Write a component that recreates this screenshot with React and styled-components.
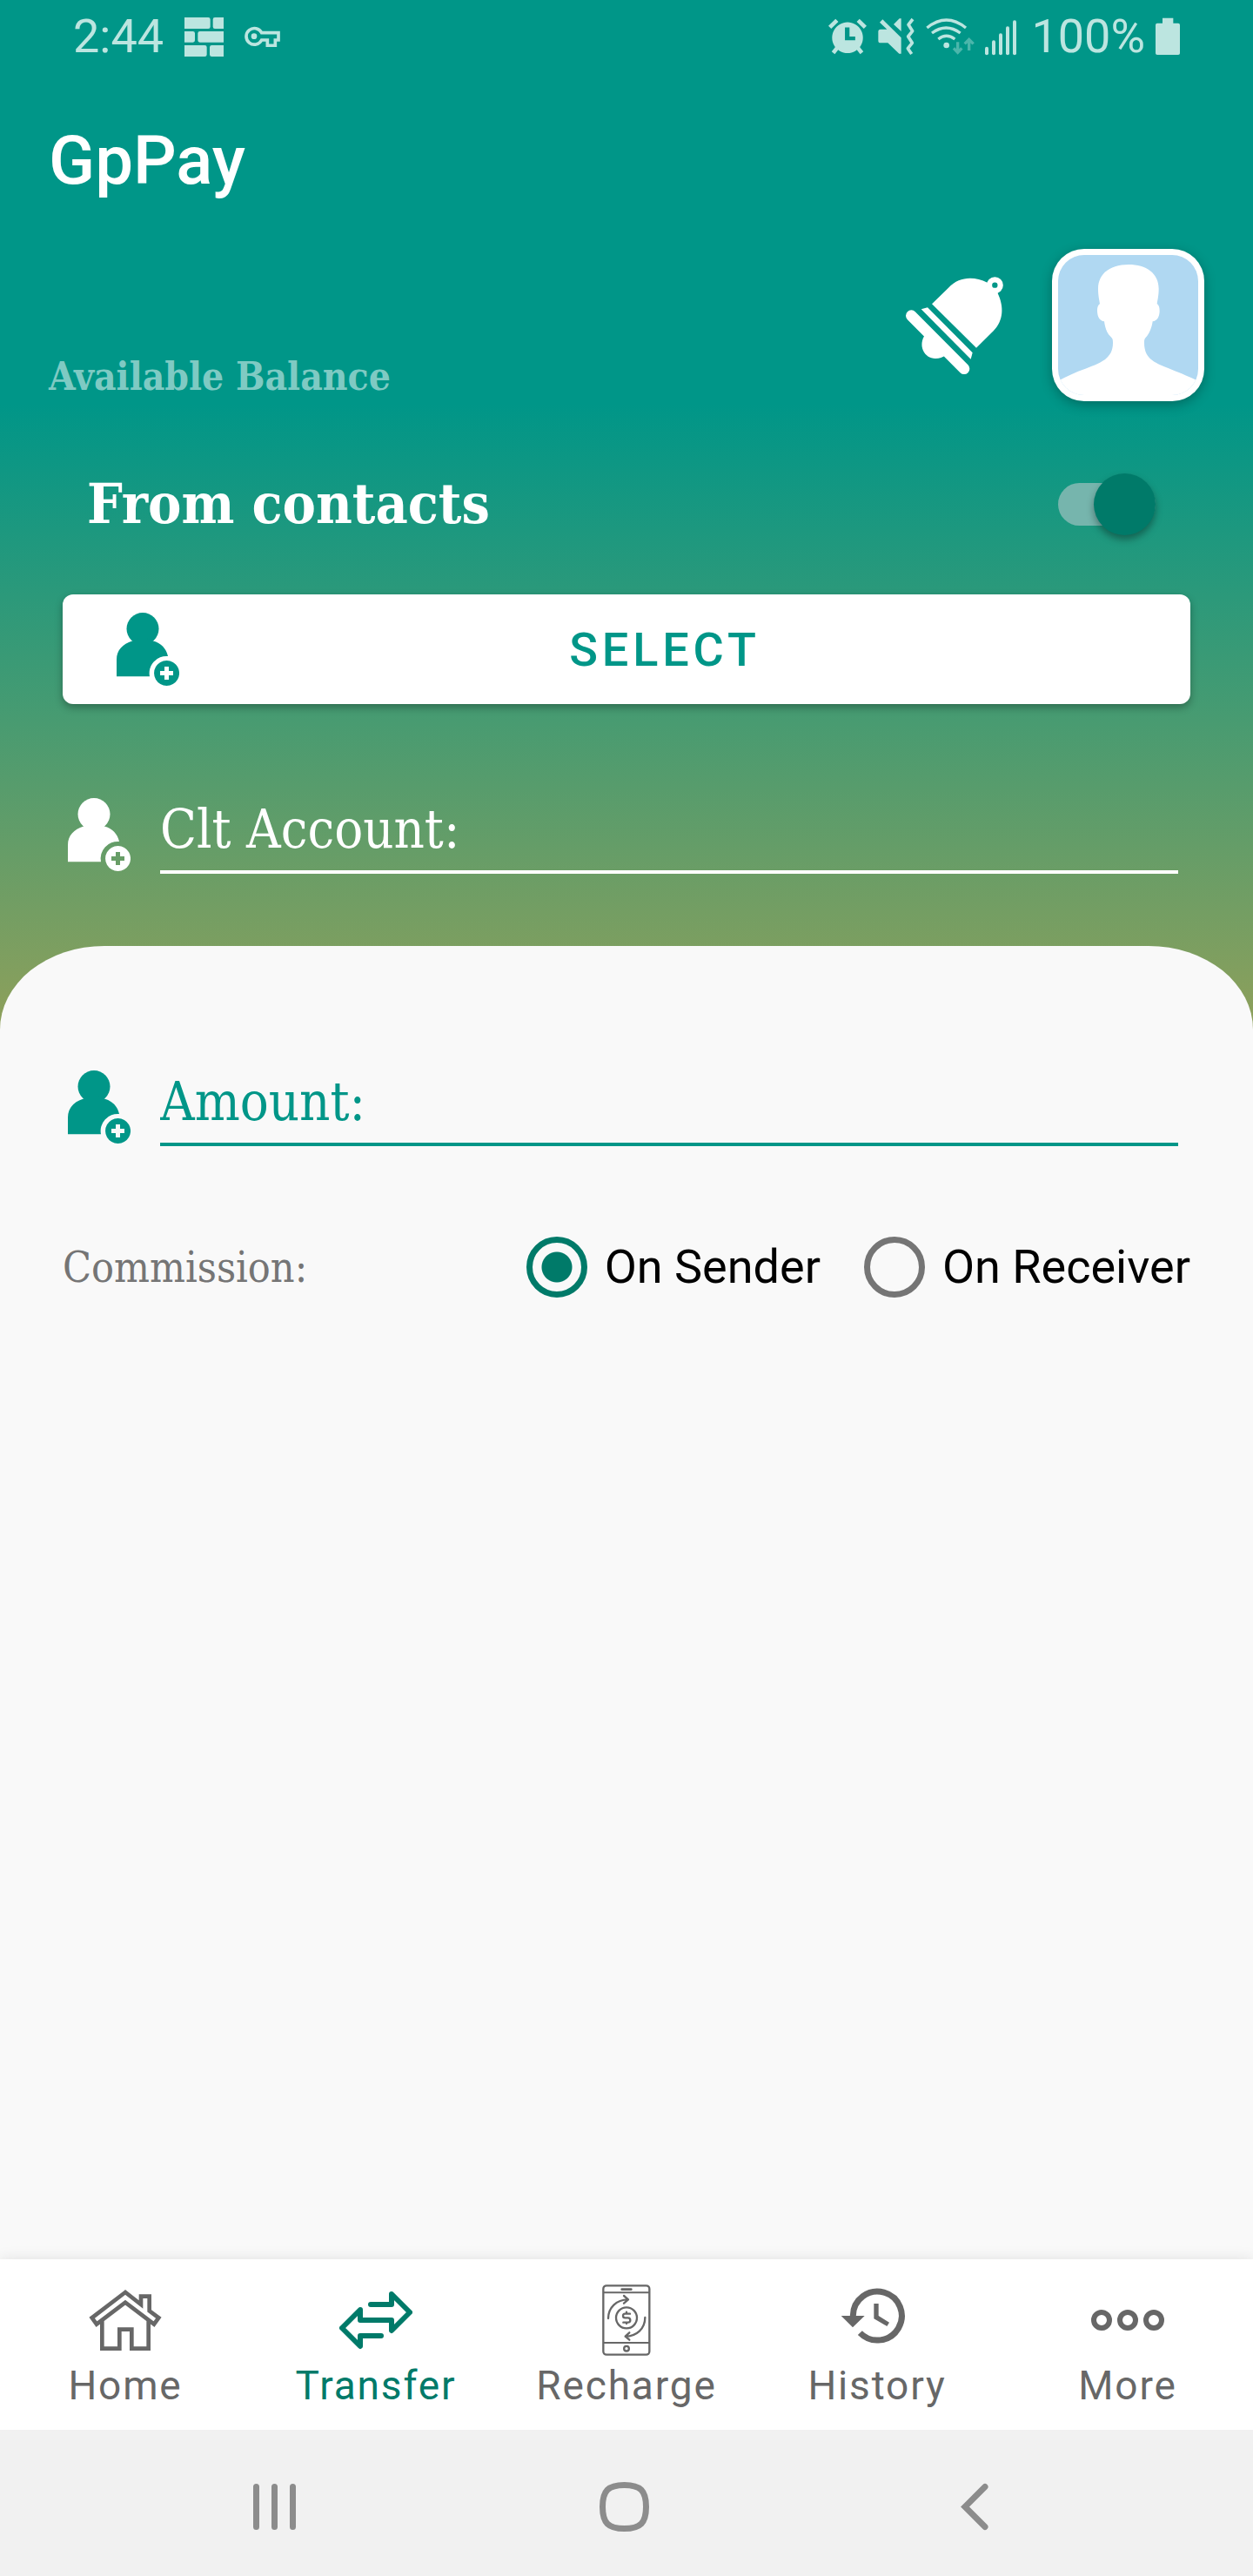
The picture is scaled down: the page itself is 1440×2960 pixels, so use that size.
import React, { useState } from "react";
import styled, { createGlobalStyle, css } from "styled-components";

const color = {
  teal: "#009688",
  tealDark: "#007a69",
  status: "#bce5e0",
  paper: "#f9f9f9",
  grey: "#676767",
  hint: "#757575",
};

const slab = `"DejaVu Serif Condensed", "DejaVu Serif", serif`;

const GlobalStyle = createGlobalStyle`
  *, *::before, *::after { box-sizing: border-box; }
  body { margin: 0; font-family: Roboto, sans-serif; }
  button, input { font: inherit; margin: 0; }
`;

const Screen = styled.div`
  display: flex;
  flex-direction: column;
  min-height: 100vh;
  background: linear-gradient(#009688 465px, #90a05a 1190px);
`;

/* Status bar */
const StatusBar = styled.header`
  display: flex;
  align-items: center;
  justify-content: space-between;
  height: 84px;
  padding: 0 84px;
  color: ${color.status};
  font-size: 54px;
  line-height: 84px;
`;

const StatusGroup = styled.div`
  display: flex;
  align-items: center;
  gap: ${(p) => p.$gap}px;
`;

const Glyph = styled.svg`
  display: block;
  flex: none;
  width: ${(p) => p.$w}px;
  height: ${(p) => p.$h || p.$w}px;
  fill: currentColor;
`;

/* Header */
const AppBar = styled.div`
  display: flex;
  align-items: center;
  height: 202px;
  padding: 0 56px;
`;

const Title = styled.h1`
  margin: 0;
  color: #fff;
  font-size: 78px;
  font-weight: 500;
  line-height: 92px;
`;

const ProfileRow = styled.div`
  display: flex;
  align-items: center;
  gap: 55px;
  padding: 0 56px;
`;

const Balance = styled.p`
  flex: 1;
  align-self: flex-end;
  margin: 0;
  color: #7fcac3;
  font-family: ${slab};
  font-size: 44px;
  font-weight: 700;
  line-height: 56px;
`;

const IconButton = styled.button`
  display: flex;
  padding: 0;
  border: 0;
  background: none;
  color: #fff;
  cursor: pointer;
`;

const AvatarButton = styled(IconButton)`
  padding: 7px;
  border-radius: 37px;
  background: #fff;
  box-shadow: 0 4px 14px rgba(0, 0, 0, 0.28);
  overflow: hidden;
`;

const AvatarPicture = styled(Glyph)`
  border-radius: 30px;
  background: #b0d8f2;
`;

/* Recipient form */
const SwitchRow = styled.div`
  display: flex;
  align-items: center;
  justify-content: space-between;
  height: 208px;
  margin: 14px 0 0;
  padding: 0 112px 0 100px;
`;

const SwitchLabel = styled.label`
  color: #fff;
  font-family: ${slab};
  font-size: 64px;
  font-weight: 700;
  line-height: 80px;
`;

const Switch = styled.input`
  appearance: none;
  position: relative;
  width: 112px;
  height: 49px;
  border-radius: 25px;
  background: #76b5ad;
  cursor: pointer;

  &::before {
    content: "";
    position: absolute;
    top: -11px;
    left: 0;
    width: 71px;
    height: 71px;
    border-radius: 50%;
    background: #f1f1f1;
    box-shadow: 0 5px 8px rgba(0, 0, 0, 0.35);
  }

  &:checked::before {
    left: auto;
    right: 0;
    background: ${color.tealDark};
  }
`;

const SelectButton = styled.button`
  display: flex;
  align-items: center;
  gap: 16px;
  height: 126px;
  margin: 0 72px;
  padding: 0 62px;
  border: 0;
  border-radius: 12px;
  background: #fff;
  box-shadow: 0 4px 10px rgba(0, 0, 0, 0.3);
  color: ${color.teal};
  font-size: 54px;
  font-weight: 500;
  letter-spacing: 0.09em;
  cursor: pointer;

  span {
    flex: 1;
    text-align: center;
  }
`;

const Field = styled.label`
  display: flex;
  align-items: flex-end;
  gap: 34px;
  padding: 0 86px 0 78px;
  color: ${(p) => p.$tone};

  svg {
    margin-bottom: 3px;
  }
`;

const FieldInput = styled.input`
  flex: 1;
  min-width: 0;
  height: 100px;
  padding: 0;
  border: 0;
  border-bottom: 4px solid currentColor;
  border-radius: 0;
  outline: 0;
  background: transparent;
  color: inherit;
  font-family: ${slab};
  font-size: 61px;

  &::placeholder {
    color: inherit;
    opacity: 1;
  }
`;

const Recipient = styled.section`
  display: flex;
  flex-direction: column;
  padding-bottom: 83px;

  ${Field} {
    margin-top: 95px;
  }
`;

/* Lower panel */
const Panel = styled.section`
  flex: 1;
  padding: 130px 0 72px;
  border-radius: 120px 120px 0 0 / 96px 96px 0 0;
  background: ${color.paper};
`;

const Commission = styled.div`
  display: flex;
  align-items: center;
  justify-content: space-between;
  margin-top: 104px;
  padding: 0 72px;
`;

const CommissionLabel = styled.span`
  color: ${color.hint};
  font-family: ${slab};
  font-size: 48px;
  line-height: 60px;
`;

const Choices = styled.div`
  display: flex;
  gap: 50px;
`;

const Choice = styled.label`
  display: flex;
  align-items: center;
  gap: 20px;
  color: #000;
  font-size: 54px;
  line-height: 70px;
`;

const Radio = styled.input`
  appearance: none;
  width: 70px;
  height: 70px;
  border: 7px solid ${color.hint};
  border-radius: 50%;

  &:checked {
    border-color: ${color.tealDark};
    background: radial-gradient(circle, ${color.tealDark} 17px, transparent 18px);
  }
`;

/* Bottom bars */
const TabBar = styled.nav`
  display: grid;
  grid-template-columns: repeat(5, 1fr);
  height: 196px;
  background: #fff;
  box-shadow: 0 0 16px rgba(0, 0, 0, 0.1);
`;

const Tab = styled.a`
  display: flex;
  flex-direction: column;
  align-items: center;
  gap: 7px;
  padding-top: 28px;
  color: ${color.grey};
  font-size: 46px;
  line-height: 52px;
  letter-spacing: 0.04em;
  text-decoration: none;
  ${(p) =>
    p.$active &&
    css`
      color: ${color.tealDark};
    `}
`;

const SystemBar = styled.nav`
  display: grid;
  grid-template-columns: repeat(3, 1fr);
  height: 168px;
  padding: 9px 120px 0 114px;
  background: #f1f1f1;
  position: relative;
`;

const SystemButton = styled(IconButton)`
  align-items: center;
  justify-content: center;
  color: #8c8c8c;
`;

const line = (width) => ({ fill: "none", stroke: "currentColor", strokeWidth: width });
const roundLine = (width) => ({ ...line(width), strokeLinecap: "round", strokeLinejoin: "round" });

const FirewallIcon = () => (
  <Glyph $w={45} viewBox="0 0 135 135" aria-hidden="true">
    <path d="M0 0h82q7 0 7 7v25q0 7-7 7H0zM105 0h30v39h-30q-7 0-7-7V7q0-7 7-7zM0 48h29q7 0 7 7v24q0 7-7 7H0zM53 48h82v38H53q-7 0-7-7V55q0-7 7-7zM0 96h70q7 0 7 7v25q0 7-7 7H0zM94 96h41v39H94q-7 0-7-7v-25q0-7 7-7z" />
  </Glyph>
);

const KeyIcon = () => (
  <Glyph $w={41} $h={24} viewBox="843 89 123 72" aria-hidden="true">
    <path d="M902 112H960V137H949V156H922V137H902A28 28 0 1 1 902 112Z" {...line(11)} />
    <circle cx="876" cy="124" r="10" />
  </Glyph>
);

const AlarmIcon = () => (
  <Glyph $w={44} viewBox="98 56 134 132" aria-hidden="true">
    <path fillRule="evenodd" d="M165 72a54 54 0 1 0 .1 0zM156 90h16v32h20v13h-36z" />
    <path d="M103 90l25-25M202 65l25 25M130 160l-15 19M200 160l15 19" {...line(14)} />
  </Glyph>
);

const VibrateIcon = () => (
  <Glyph $w={44} viewBox="256 56 132 132" aria-hidden="true">
    <path d="M268 97h22l-25-24 10-10 64 63v55h-7l-39-37h-25q-8 0-8-8v-31q0-8 8-8zM313 80l20-20h6v44z" />
    <path d="M379 62l-15 19 14 22-15 19 14 22-15 19 13 19" {...line(11)} strokeLinejoin="round" />
  </Glyph>
);

const WifiIcon = () => (
  <Glyph $w={56} $h={44} viewBox="437 56 168 132" aria-hidden="true">
    <path d="M441 92Q508 38 575 92M458 110Q507 74 556 110M480 131Q508 109 537 131" {...line(10)} />
    <circle cx="508" cy="152" r="10" />
    <path d="M547 141v36M533 162l14 15 14-15M586 170v-38M571 147l15-15 15 15" {...line(10)} opacity="0.4" />
  </Glyph>
);

const SignalIcon = () => (
  <Glyph $w={41} $h={44} viewBox="639 56 123 132" aria-hidden="true">
    {[157, 135, 111, 87, 66].map((y, i) => (
      <rect key={y} x={639 + i * 24} y={y} width="12" height={186 - y} rx="6" />
    ))}
  </Glyph>
);

const BatteryIcon = () => (
  <Glyph $w={28} $h={44} viewBox="1224 56 84 132" aria-hidden="true">
    <path d="M1248 58h37v18h17q6 0 6 6v98q0 5-6 5h-72q-6 0-6-5V82q0-6 6-6h18z" />
  </Glyph>
);

const BellIcon = () => (
  <Glyph $w={114} viewBox="120 168 342 342" aria-hidden="true">
    <path d="M213 265L270 209C308 169 358 169 404 191L440 228C462 275 460 322 425 358L366 416Z" />
    <circle cx="430" cy="200" r="19" fill={color.teal} stroke="currentColor" strokeWidth="19" />
    <path d="M176 283L198 277L353 433L347 455Z" />
    <path d="M142 305L324 488" {...roundLine(38)} />
    <path d="M190 370C163 408 186 453 225 453C240 453 250 449 260 442Z" />
  </Glyph>
);

const AvatarIcon = () => (
  <AvatarPicture $w={161} viewBox="648 99 483 483" aria-hidden="true">
    <path
      fill="#fff"
      d="M891 132C952 132 995 162 995 215C995 240 991 252 989 268C997 272 998 284 998 293C997 313 990 325 974 328C971 350 963 368 955 378C945 388 945 392 945 402C945 460 985 472 1040 494C1075 508 1100 518 1131 533V583H648V533C680 516 707 503 742 491C797 470 837 455 837 402C837 392 837 388 829 380C817 370 810 350 807 328C791 325 784 313 783 293C783 284 784 272 792 268C790 252 786 240 786 215C786 162 830 132 891 132Z"
    />
  </AvatarPicture>
);

const PersonAddIcon = () => (
  <Glyph $w={72} $h={84} viewBox="0 0 72 84" aria-hidden="true">
    <circle cx="30" cy="18.5" r="18.5" />
    <path d="M18 32.5C7 36 0 43 0 54V73.3H38A19.6 19.6 0 0 1 59 50C57 41 51 35 42 32.5L30 28Z" />
    <path fillRule="evenodd" d="M57.5 55a14.5 14.5 0 1 0 .1 0zM55 62h5v5h5v5h-5v5h-5v-5h-5v-5h5z" />
  </Glyph>
);

const HomeIcon = () => (
  <Glyph $w={84} viewBox="186 132 252 252" aria-hidden="true">
    <path
      d="M312 162L197 250L213 272L312 197L411 272L427 250L395 226V176H366V204ZM232 258V356H292V290H334V356H392V258"
      {...line(14)}
    />
  </Glyph>
);

const TransferIcon = () => (
  <Glyph $w={84} viewBox="1050 132 252 252" aria-hidden="true">
    <path d="M1158 204H1230V168L1293 231L1230 294V258H1122V222L1059 285L1122 348V312H1194" {...roundLine(18)} />
  </Glyph>
);

const RechargeIcon = () => (
  <Glyph $w={84} viewBox="294 132 252 252" aria-hidden="true">
    <rect x="340" y="139" width="159" height="238" rx="11" {...line(7)} />
    <path d="M340 163H499M340 336H499" {...line(6)} />
    <path d="M404 152H436" {...roundLine(8)} />
    <circle cx="420" cy="356" r="8.5" {...line(7)} />
    <circle cx="420" cy="250" r="36" {...line(7)} />
    <path
      d="M432 236H415A7 7 0 0 0 415 250H425A8 8 0 0 1 425 266H409M420 230V236M420 266V270M357 252C357 215 385 187 425 187M411 174L426 187L411 200M484 249C484 287 455 314 416 314M430 301L416 314L430 326"
      {...roundLine(7)}
    />
  </Glyph>
);

const HistoryIcon = () => (
  <Glyph $w={84} viewBox="1158 132 252 252" aria-hidden="true">
    <path d="M1201 246V242A84 84 0 1 1 1225 302" {...line(21)} />
    <path d="M1160 243H1241L1200 283ZM1273 201H1289V243L1326 266L1318 279L1273 253Z" />
  </Glyph>
);

const MoreIcon = () => (
  <Glyph $w={84} viewBox="522 132 252 252" aria-hidden="true">
    {[558, 648, 738].map((x) => (
      <circle key={x} cx={x} cy="258" r="27" {...line(18)} />
    ))}
  </Glyph>
);

const RecentsIcon = () => (
  <Glyph $w={57} viewBox="0 0 57 57" aria-hidden="true">
    <path d="M7.5 5.500V51.500M28.500 5.500V51.500M49.500 5.500V51.500" {...roundLine(7)} />
  </Glyph>
);

const HomeKeyIcon = () => (
  <Glyph $w={57} viewBox="0 0 57 57" aria-hidden="true">
    <path
      d="M28.500 3.500C47 3.500 53.500 10 53.500 28.500S47 53.500 28.500 53.500S3.500 47 3.500 28.500S10 3.500 28.500 3.500Z"
      {...line(7)}
    />
  </Glyph>
);

const BackIcon = () => (
  <Glyph $w={57} viewBox="0 0 57 57" aria-hidden="true">
    <path d="M41 5.500L18 28.500L41 51.500" {...line(7)} strokeLinecap="round" />
  </Glyph>
);

const tabs = [
  { name: "Home", Icon: HomeIcon },
  { name: "Transfer", Icon: TransferIcon },
  { name: "Recharge", Icon: RechargeIcon },
  { name: "History", Icon: HistoryIcon },
  { name: "More", Icon: MoreIcon },
];

const systemKeys = [
  { name: "Recent apps", Icon: RecentsIcon },
  { name: "Home screen", Icon: HomeKeyIcon },
  { name: "Back", Icon: BackIcon },
];

export default function App() {
  const [fromContacts, setFromContacts] = useState(true);
  const [payer, setPayer] = useState("On Sender");

  return (
    <Screen>
      <GlobalStyle />
      <StatusBar>
        <StatusGroup $gap={24}>
          <span>2:44</span>
          <FirewallIcon />
          <KeyIcon />
        </StatusGroup>
        <StatusGroup $gap={12}>
          <AlarmIcon />
          <VibrateIcon />
          <WifiIcon />
          <SignalIcon />
          <span>100%</span>
          <BatteryIcon />
        </StatusGroup>
      </StatusBar>

      <AppBar>
        <Title>GpPay</Title>
      </AppBar>

      <ProfileRow>
        <Balance>Available Balance</Balance>
        <IconButton type="button" aria-label="Notifications">
          <BellIcon />
        </IconButton>
        <AvatarButton type="button" aria-label="Profile">
          <AvatarIcon />
        </AvatarButton>
      </ProfileRow>

      <Recipient>
        <SwitchRow>
          <SwitchLabel htmlFor="from-contacts">From contacts</SwitchLabel>
          <Switch
            id="from-contacts"
            type="checkbox"
            role="switch"
            checked={fromContacts}
            onChange={(e) => setFromContacts(e.target.checked)}
          />
        </SwitchRow>
        <SelectButton type="button">
          <PersonAddIcon />
          <span>SELECT</span>
        </SelectButton>
        <Field $tone="#fff">
          <PersonAddIcon />
          <FieldInput type="text" placeholder="Clt Account:" aria-label="Clt Account" />
        </Field>
      </Recipient>

      <Panel>
        <Field $tone={color.teal}>
          <PersonAddIcon />
          <FieldInput type="text" inputMode="decimal" placeholder="Amount:" aria-label="Amount" />
        </Field>
        <Commission role="radiogroup" aria-labelledby="commission">
          <CommissionLabel id="commission">Commission:</CommissionLabel>
          <Choices>
            {["On Sender", "On Receiver"].map((name) => (
              <Choice key={name}>
                <Radio
                  type="radio"
                  name="commission"
                  checked={payer === name}
                  onChange={() => setPayer(name)}
                />
                {name}
              </Choice>
            ))}
          </Choices>
        </Commission>
      </Panel>

      <TabBar>
        {tabs.map(({ name, Icon }) => (
          <Tab key={name} href={`#${name.toLowerCase()}`} $active={name === "Transfer"}>
            <Icon />
            {name}
          </Tab>
        ))}
      </TabBar>

      <SystemBar>
        {systemKeys.map(({ name, Icon }) => (
          <SystemButton key={name} type="button" aria-label={name}>
            <Icon />
          </SystemButton>
        ))}
      </SystemBar>
    </Screen>
  );
}
